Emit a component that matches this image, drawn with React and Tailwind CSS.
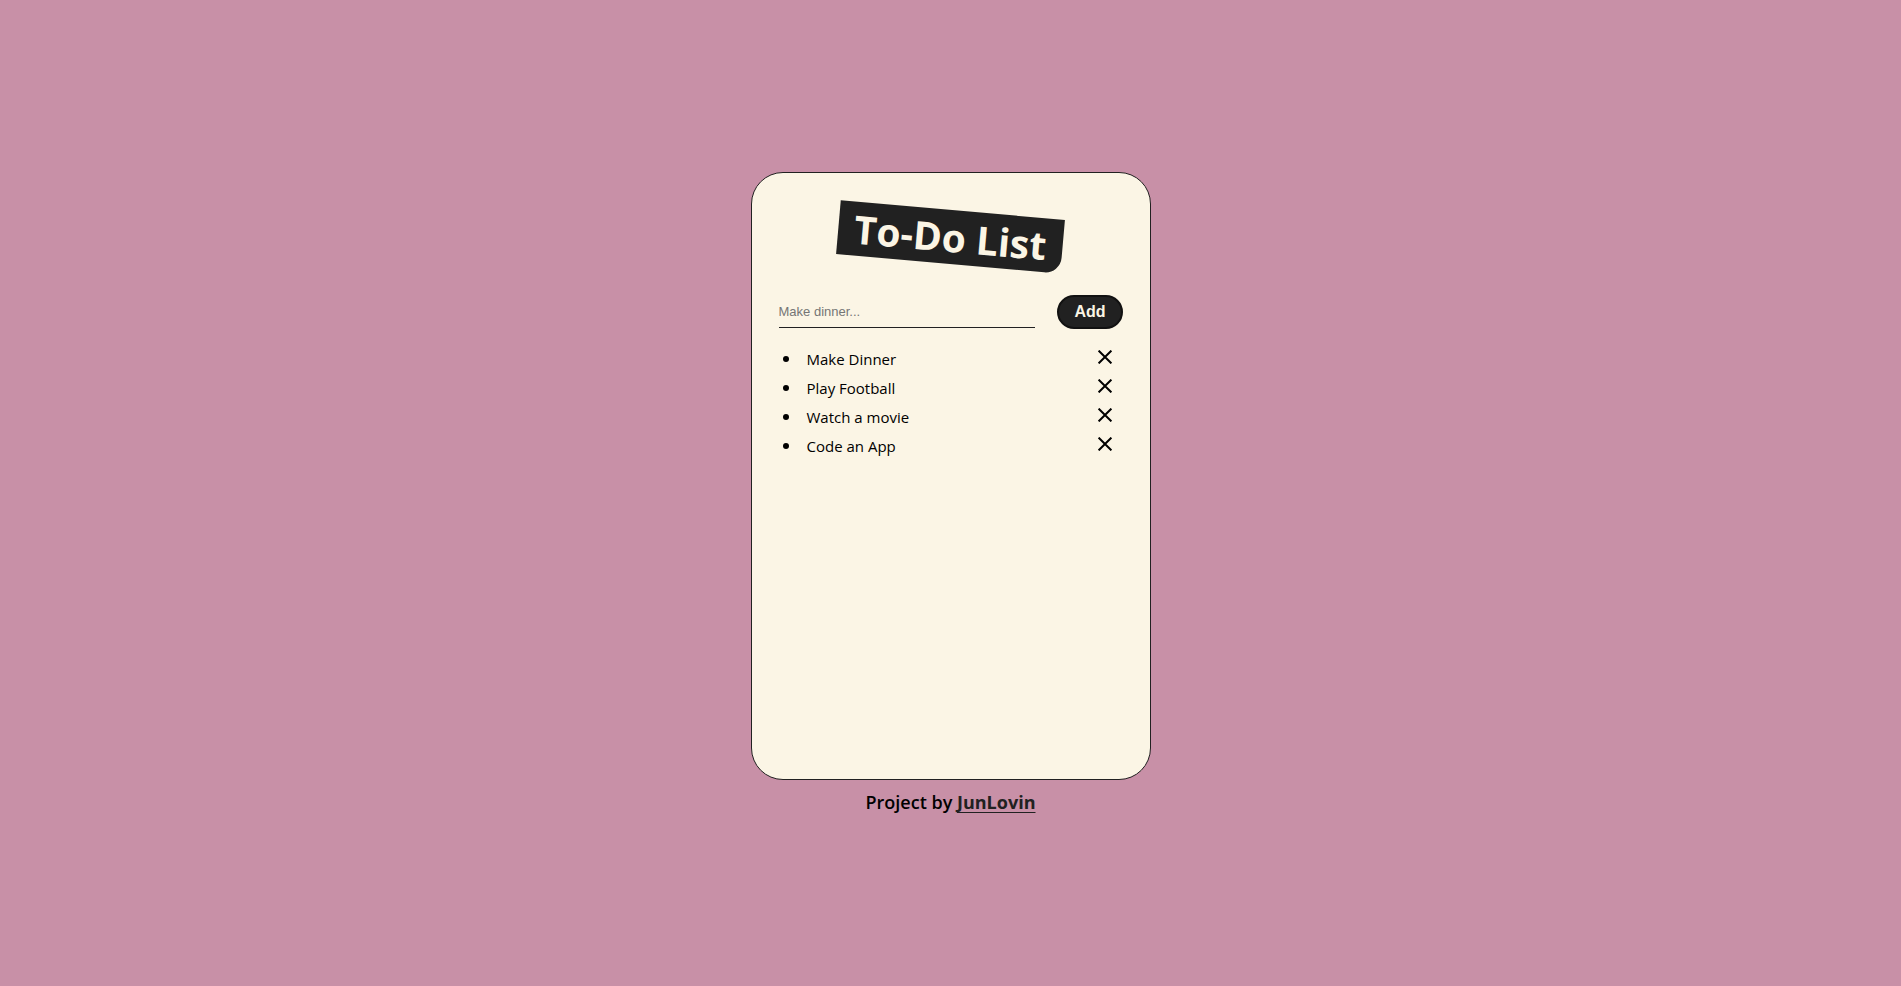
import { useState } from "react";

const initialTasks = ["Make Dinner", "Play Football", "Watch a movie", "Code an App"];

function CloseIcon() {
  return (
    <svg viewBox="0 0 14 14" className="size-3.5" fill="none" stroke="currentColor" strokeWidth="2" aria-hidden="true">
      <path d="M0.6 0.6 13.4 13.4M13.4 0.6 0.6 13.4" />
    </svg>
  );
}

export default function App() {
  const [tasks, setTasks] = useState(initialTasks);
  const [draft, setDraft] = useState("");

  function addTask(event) {
    event.preventDefault();
    if (!draft.trim()) return;
    setTasks([...tasks, draft.trim()]);
    setDraft("");
  }

  return (
    <div className="flex min-h-screen flex-col items-center justify-center bg-[#c890a7] px-4 font-['Open_Sans','Noto_Sans',sans-serif] text-black">
      <main className="flex min-h-[608px] w-full max-w-[400px] flex-col rounded-[32px] border border-[#212121] bg-[#fbf5e5] px-[27px] pt-[37px]">
        <h1 className="rotate-5 self-center rounded-br-2xl bg-[#212121] px-4 text-[39px] leading-[54px] font-bold whitespace-nowrap text-[#fbf5e5]">
          To-Do List
        </h1>
        <form onSubmit={addTask} className="mt-[31px] flex items-start justify-between font-['Liberation_Sans',Arial,sans-serif]">
          <input
            type="text"
            aria-label="New task"
            placeholder="Make dinner..."
            value={draft}
            onChange={(event) => setDraft(event.target.value)}
            className="h-[33px] w-64 border-b border-[#212121] bg-transparent text-[13px] outline-none placeholder:text-[#757575]"
          />
          <button type="submit" className="h-[34px] rounded-full border-2 border-[#111111] bg-[#212121] px-[15px] text-base leading-5 font-bold text-[#fbf5e5]">
            Add
          </button>
        </form>
        <ul className="mt-[15px] pr-[11px]">
          {tasks.map((task, index) => (
            <li key={index} className="flex h-[29px] items-center">
              <span className="ml-1 size-1.5 rounded-full bg-black" />
              <span className="ml-[18px] flex-1 text-[15px] leading-5">{task}</span>
              <button type="button" aria-label={"Remove " + task} className="pb-1" onClick={() => setTasks(tasks.filter((_, i) => i !== index))}>
                <CloseIcon />
              </button>
            </li>
          ))}
        </ul>
      </main>
      <footer className="mt-[10px] text-lg leading-6 font-semibold">
        Project by{" "}
        <a href="#junlovin" className="font-bold text-[#212121] underline decoration-1 underline-offset-3 [text-decoration-skip-ink:none]">
          JunLovin
        </a>
      </footer>
    </div>
  );
}
